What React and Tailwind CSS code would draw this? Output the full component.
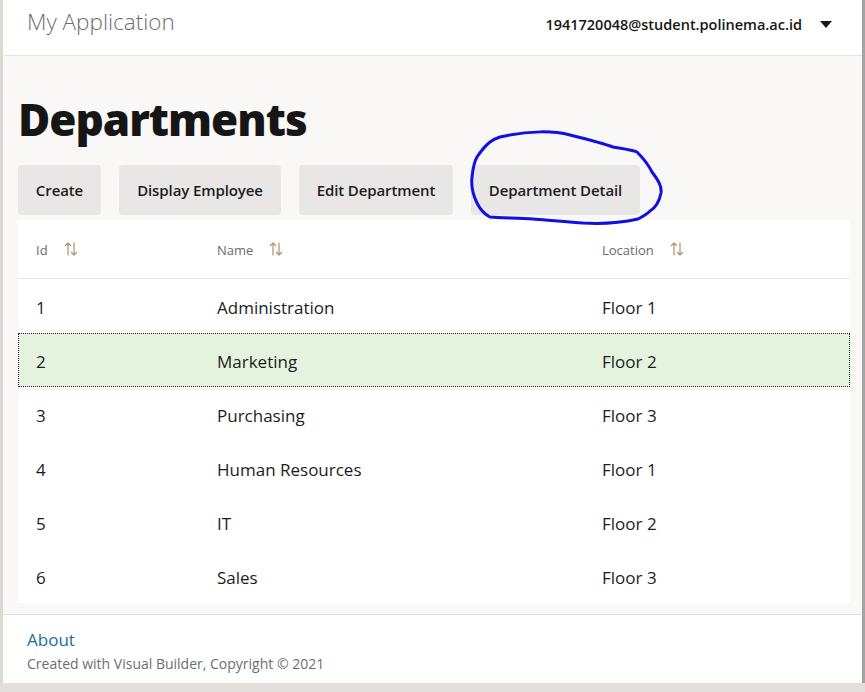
import React from 'react';

const rows = [
  { id: 1, name: 'Administration', location: 'Floor 1' },
  { id: 2, name: 'Marketing', location: 'Floor 2', selected: true },
  { id: 3, name: 'Purchasing', location: 'Floor 3' },
  { id: 4, name: 'Human Resources', location: 'Floor 1' },
  { id: 5, name: 'IT', location: 'Floor 2' },
  { id: 6, name: 'Sales', location: 'Floor 3' },
];

const buttons = [
  { label: 'Create', w: 'w-[83px]' },
  { label: 'Display Employee', w: 'w-[162px]' },
  { label: 'Edit Department', w: 'w-[154px]' },
  { label: 'Department Detail', w: 'w-[169px]' },
];

const SortIcon = () => (
  <svg width="14" height="16" viewBox="0 0 14 16" fill="none" stroke="#b39166" strokeWidth="1.2" strokeLinecap="round" strokeLinejoin="round">
    <path d="M4 14V2M1.5 4.5L4 2l2.5 2.5" />
    <path d="M10 2v12M7.5 11.5L10 14l2.5-2.5" />
  </svg>
);

const HeaderCell = ({ label, className }) => (
  <div className={`flex items-center gap-[16px] pl-[18px] ${className}`}>
    <span className="text-[13px] text-[#6b6b6b] mt-[3px]">{label}</span>
    <SortIcon />
  </div>
);

export default function App() {
  return (
    <div className="w-[865px] h-[692px] bg-[#e1dedb] flex overflow-hidden" style={{ fontFamily: '"Open Sans", "Noto Sans", sans-serif' }}>
      <div className="w-[3px] h-[683px] bg-[#dcd8d4]" />
      <div className="w-[859px] h-[683px] flex flex-col relative">
        {/* Header */}
        <header className="h-[56px] bg-white border-b border-[#e3e3e3] flex items-center justify-between pl-[24px] pr-[30px]">
          <span className="text-[22.5px] font-light text-[#6e6e6e] -mt-[11px]">My Application</span>
          <div className="flex items-center gap-[18px] -mt-[5px]">
            <span className="text-[14.5px] font-semibold text-[#161616]">1941720048@student.polinema.ac.id</span>
            <svg width="12" height="8" viewBox="0 0 12 8"><path d="M0 0h12L6 7z" fill="#161616" /></svg>
          </div>
        </header>

        {/* Content */}
        <main className="flex-1 bg-[#f9f8f7] pl-[15px] pr-[12px] pt-[34px]">
          <h1 className="text-[44px] font-extrabold text-[#161616] leading-[58px] tracking-[-1px]">Departments</h1>
          <div className="flex gap-[18px] mt-[17px]">
            {buttons.map((b) => (
              <button key={b.label} className={`h-[50px] ${b.w} bg-[#e9e7e5] rounded-[4px] text-[15px] font-semibold text-[#1d1d1d] tracking-[-0.1px] whitespace-nowrap`}>
                {b.label}
              </button>
            ))}
          </div>
          <div className="mt-[5px] w-[832px] bg-white">
            <div className="h-[59px] flex border-b border-[#e5e5e5]">
              <HeaderCell label="Id" className="w-[181px]" />
              <HeaderCell label="Name" className="w-[385px]" />
              <HeaderCell label="Location" className="flex-1" />
            </div>
            {rows.map((r) => (
              <div
                key={r.id}
                className={`h-[54px] flex items-center pt-[4px] text-[17px] text-[#1d1d1d] ${r.selected ? 'bg-[#e3f3dd] outline outline-1 outline-dotted outline-[#222] -outline-offset-1' : ''}`}
              >
                <span className="w-[181px] pl-[18px]">{r.id}</span>
                <span className="w-[385px] pl-[18px]">{r.name}</span>
                <span className="flex-1 pl-[18px]">{r.location}</span>
              </div>
            ))}
          </div>
        </main>

        {/* Footer */}
        <footer className="h-[69px] bg-white border-t border-[#e3e3e3] pl-[24px] pt-[13px]">
          <div className="text-[17px] text-[#1a6c9c] leading-[24px]">About</div>
          <div className="text-[14px] text-[#6e6e6e] leading-[22px] mt-[1px]">Created with Visual Builder, Copyright © 2021</div>
        </footer>

        {/* hand-drawn annotation */}
        <svg className="absolute left-0 top-0 pointer-events-none" width="859" height="683" viewBox="3 0 859 683" fill="none">
          <path
            d="M500 137 C530 130 555 131 570 135 C590 140 605 144 613 147 C625 149 633 150 637 152 C645 160 650 168 652 172 C658 180 662 186 661 193 C659 203 655 208 650 211 C646 215 642 217 638 219 C620 223 600 224 583 223 C560 221 545 220 533 219 C515 218 500 218 490 217 C484 214 480 209 477 203 C473 195 471 186 472 177 C473 168 474 162 477 157 C481 151 485 146 490 142 C494 139 497 138 500 137 Z"
            stroke="#0f0fe6"
            strokeWidth="3"
            strokeLinejoin="round"
          />
        </svg>
      </div>
      <div className="w-[3px] h-[683px] bg-[#a3a3a3]" />
    </div>
  );
}
